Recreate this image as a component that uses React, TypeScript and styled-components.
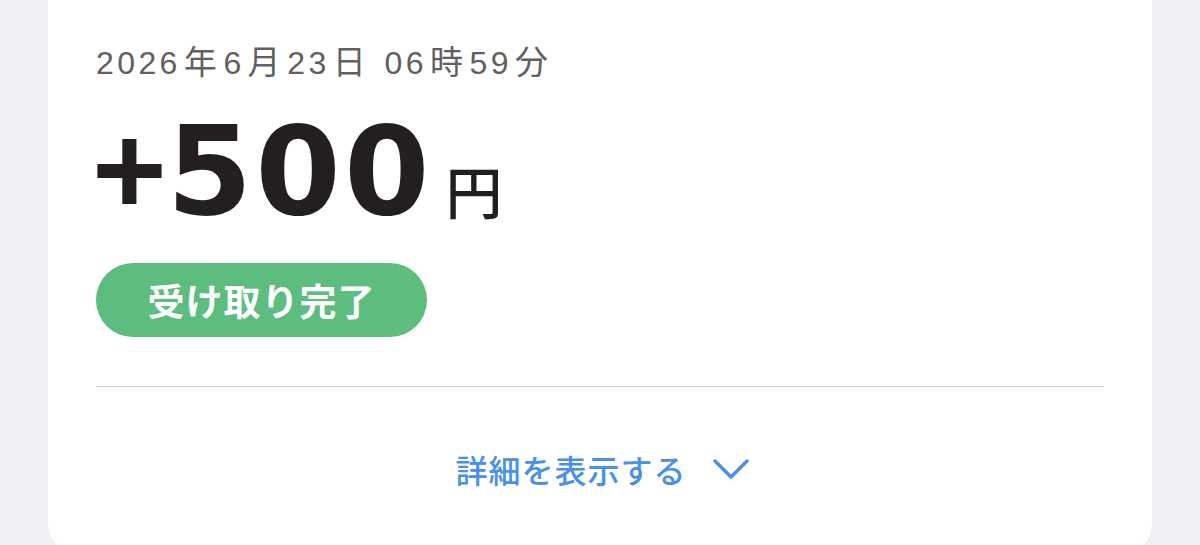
import styled, { createGlobalStyle } from "styled-components";

const GlobalStyle = createGlobalStyle`
    html, body {
        margin: 0;
        padding: 0;
        height: 545px;
        overflow: hidden;
        background: #EFF0F4;
    }
`
const Page = styled.div`
    display: flex;
    justify-content: center;
    padding: 0 48px;
    font-family: "Liberation Sans", "Noto Sans CJK JP", sans-serif;
`
const Card = styled.div`
    flex: 1;
    display: flex;
    flex-direction: column;
    background: #FFFFFF;
    border-radius: 0 0 28px 28px;
    padding: 38px 48px 0;
    height: 514px;
`
const DateText = styled.p`
    margin: 0;
    font-size: 32px;
    line-height: 44px;
    letter-spacing: 3.4px;
    color: #606060;
`
const DateUnit = styled.span`
    font-family: "Noto Sans CJK JP", sans-serif;
    font-size: 33px;
    letter-spacing: 2.6px;
    margin: 0 4px 0 3px;
`
const AmountRow = styled.div`
    display: flex;
    align-items: baseline;
    margin-top: 21px;
    color: #231F20;
`
const Plus = styled.span`
    font-family: "Liberation Sans", sans-serif;
    font-weight: 700;
    font-size: 128px;
    line-height: 128px;
    margin-left: -4px;
`
const Amount = styled.span`
    font-family: "DejaVu Sans", "Liberation Sans", sans-serif;
    font-weight: 700;
    font-size: 123px;
    line-height: 128px;
    letter-spacing: 3px;
`
const Unit = styled.span`
    margin-left: 13px;
    font-family: "Noto Sans CJK JP", sans-serif;
    font-size: 57px;
    font-weight: 500;
`
const StatusBadge = styled.div`
    align-self: flex-start;
    display: flex;
    align-items: center;
    justify-content: center;
    width: 331px;
    height: 74px;
    margin-top: 27px;
    border-radius: 37px;
    background: #5CBD7F;
    color: #FFFFFF;
    font-family: "Noto Sans CJK JP", sans-serif;
    font-size: 37px;
    font-weight: 700;
    letter-spacing: 1px;
`
const Divider = styled.hr`
    margin: 49px 0 0;
    border: none;
    border-top: 1px solid #CCCCCC;
`
const DetailsButton = styled.button`
    display: flex;
    align-items: center;
    justify-content: center;
    gap: 26px;
    height: 166px;
    padding: 0 0 0 4px;
    border: none;
    background: none;
    color: #4A8FE8;
    font-family: "Noto Sans CJK JP", sans-serif;
    font-size: 32px;
    font-weight: 500;
    letter-spacing: 1px;
`
const Chevron = styled.svg`
    width: 36px;
    height: 21px;
    stroke: #4D8FE6;
    stroke-width: 3.5;
    fill: none;
    stroke-linecap: round;
    stroke-linejoin: round;
`

export default function App() {
    return (
        <Page>
            <GlobalStyle/>
            <Card>
                <DateText>
                    2026<DateUnit>年</DateUnit>6<DateUnit>月</DateUnit>23<DateUnit>日</DateUnit> 06<DateUnit>時</DateUnit>59<DateUnit>分</DateUnit>
                </DateText>
                <AmountRow>
                    <Plus>+</Plus>
                    <Amount>500</Amount>
                    <Unit>円</Unit>
                </AmountRow>
                <StatusBadge>受け取り完了</StatusBadge>
                <Divider/>
                <DetailsButton>
                    詳細を表示する
                    <Chevron viewBox="0 0 36 21">
                        <path d="M2 2 L18 18 L34 2"/>
                    </Chevron>
                </DetailsButton>
            </Card>
        </Page>
    );
}
